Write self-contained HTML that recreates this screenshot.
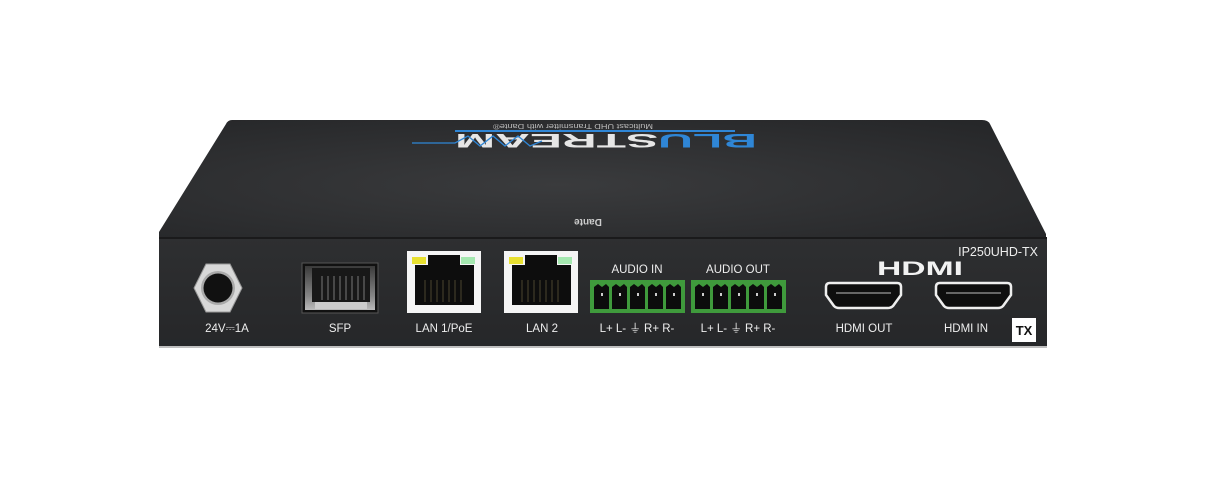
<!DOCTYPE html>
<html><head><meta charset="utf-8"><style>
html,body{margin:0;padding:0;background:#fff;width:1214px;height:486px;overflow:hidden}
svg{display:block}
text{font-family:"Liberation Sans",sans-serif}
</style></head><body>
<svg width="1214" height="486" viewBox="0 0 1214 486" xmlns="http://www.w3.org/2000/svg">
<defs>
<radialGradient id="tg" cx="0.45" cy="0.55" r="0.7">
<stop offset="0" stop-color="#3a3b3d"/><stop offset="1" stop-color="#262729"/>
</radialGradient>
<linearGradient id="fg" x1="0" y1="0" x2="0" y2="1">
<stop offset="0" stop-color="#2e2f31"/><stop offset="1" stop-color="#262729"/>
</linearGradient>
<linearGradient id="sfp" x1="0" y1="0" x2="0" y2="1">
<stop offset="0" stop-color="#3a3a3a"/><stop offset="0.7" stop-color="#888"/><stop offset="1" stop-color="#bbb"/>
</linearGradient>
</defs>
<path d="M232 120 L982 120 Q988 120 990 124 L1046 234 L1046 238 L159 238 L159 232 L226 124 Q228 120 232 120Z" fill="url(#tg)"/>
<rect x="159" y="237" width="888" height="110" fill="url(#fg)"/>
<rect x="159" y="237" width="888" height="2" fill="#1a1a1b"/>
<rect x="159" y="346" width="888" height="2" fill="#bfbfbf"/>
<g transform="rotate(180 606 136)">
<text x="606" y="138" text-anchor="middle" font-size="19" font-weight="bold" fill="#e6e6e6" textLength="302" lengthAdjust="spacingAndGlyphs"><tspan fill="#2f86d6">BLU</tspan>STREAM</text>
<text x="639" y="148" text-anchor="middle" font-size="7" fill="#bbb" textLength="160" lengthAdjust="spacingAndGlyphs">Multicast UHD Transmitter with Dante®</text>
</g>
<rect x="455" y="130" width="280" height="2" fill="#2f86d6"/>
<path d="M412 143 L455 143 L468 136 L480 146 L493 136 L505 146 L518 136 L530 146 L542 141" stroke="#2f86d6" stroke-width="1.3" fill="none"/>
<text x="588" y="225" text-anchor="middle" font-size="10" font-weight="bold" fill="#ccc" transform="rotate(180 588 222)">Dante</text>
<polygon points="206,264 230,264 242,288 230,312 206,312 194,288" fill="#d8d8d8" stroke="#999"/>
<circle cx="218" cy="288" r="17" fill="#aaa"/>
<circle cx="218" cy="288" r="14.5" fill="#111"/>
<text x="227" y="332" text-anchor="middle" font-size="11.5" fill="#eee">24V⎓1A</text>
<rect x="302" y="263" width="76" height="50" fill="#111" stroke="#555"/>
<rect x="305" y="266" width="70" height="44" fill="url(#sfp)"/>
<rect x="312" y="268" width="58" height="34" fill="#181818"/>
<g stroke="#777" stroke-width="1"><path d="M322 276V300M328 276V300M334 276V300M340 276V300M346 276V300M352 276V300M358 276V300M364 276V300"/></g>
<rect x="315" y="302" width="52" height="7" fill="#ccc"/>
<text x="340" y="332" text-anchor="middle" font-size="11.5" fill="#eee">SFP</text>
<g id="lan">
<rect x="407" y="251" width="74" height="62" fill="#f5f5f5"/>
<rect x="412" y="257" width="14" height="7" fill="#e8e030"/>
<rect x="461" y="257" width="14" height="7" fill="#a5e8b0"/>
<path d="M428 255 L460 255 L460 265 L474 265 L474 305 L415 305 L415 265 L428 265Z" fill="#0d0d0d"/>
<g stroke="#4a4530" stroke-width="1"><path d="M425 280V302M431 280V302M437 280V302M443 280V302M449 280V302M455 280V302M461 280V302"/></g>
</g>
<use href="#lan" x="97"/>
<text x="444" y="332" text-anchor="middle" font-size="11.5" fill="#eee">LAN 1/PoE</text>
<text x="542" y="332" text-anchor="middle" font-size="11.5" fill="#eee">LAN 2</text>
<g id="aud">
<rect x="590" y="280" width="95" height="33" fill="#3f9a3c"/>
<g fill="#0c0c0c">
<path d="M594 287 L598 284 L602 287 L606 284 L609 287 V309 H594Z"/>
<path d="M612 287 L616 284 L620 287 L624 284 L627 287 V309 H612Z"/>
<path d="M630 287 L634 284 L638 287 L642 284 L645 287 V309 H630Z"/>
<path d="M648 287 L652 284 L656 287 L660 284 L663 287 V309 H648Z"/>
<path d="M666 287 L670 284 L674 287 L678 284 L681 287 V309 H666Z"/>
</g>
<g fill="#ccc"><rect x="601" y="293" width="2" height="3"/><rect x="619" y="293" width="2" height="3"/><rect x="637" y="293" width="2" height="3"/><rect x="655" y="293" width="2" height="3"/><rect x="673" y="293" width="2" height="3"/></g>
</g>
<use href="#aud" x="101"/>
<text x="637" y="273" text-anchor="middle" font-size="11.5" fill="#eee">AUDIO IN</text>
<text x="738" y="273" text-anchor="middle" font-size="11.5" fill="#eee">AUDIO OUT</text>
<text x="637" y="332" text-anchor="middle" font-size="11.5" fill="#eee">L+ L-  ⏚ R+ R-</text>
<text x="738" y="332" text-anchor="middle" font-size="11.5" fill="#eee">L+ L-  ⏚ R+ R-</text>
<text x="877" y="275" font-size="19" font-weight="bold" fill="#f2f2f2" textLength="86" lengthAdjust="spacingAndGlyphs">HDMI</text>
<g id="hd">
<path d="M830 283 H897 Q901 283 901 287 V295 L893 306 Q891 308 888 308 H839 Q836 308 834 306 L826 295 V287 Q826 283 830 283Z" fill="#0e0e0e" stroke="#eee" stroke-width="2.5"/>
<rect x="836" y="292" width="55" height="2" fill="#666"/>
</g>
<use href="#hd" x="110"/>
<text x="864" y="332" text-anchor="middle" font-size="11.5" fill="#eee">HDMI OUT</text>
<text x="966" y="332" text-anchor="middle" font-size="11.5" fill="#eee">HDMI IN</text>
<text x="1038" y="256" text-anchor="end" font-size="12.5" fill="#eee">IP250UHD-TX</text>
<rect x="1012" y="318" width="24" height="24" fill="#fff"/>
<text x="1024" y="335" text-anchor="middle" font-size="13" font-weight="bold" fill="#111">TX</text>
</svg>
</body></html>
